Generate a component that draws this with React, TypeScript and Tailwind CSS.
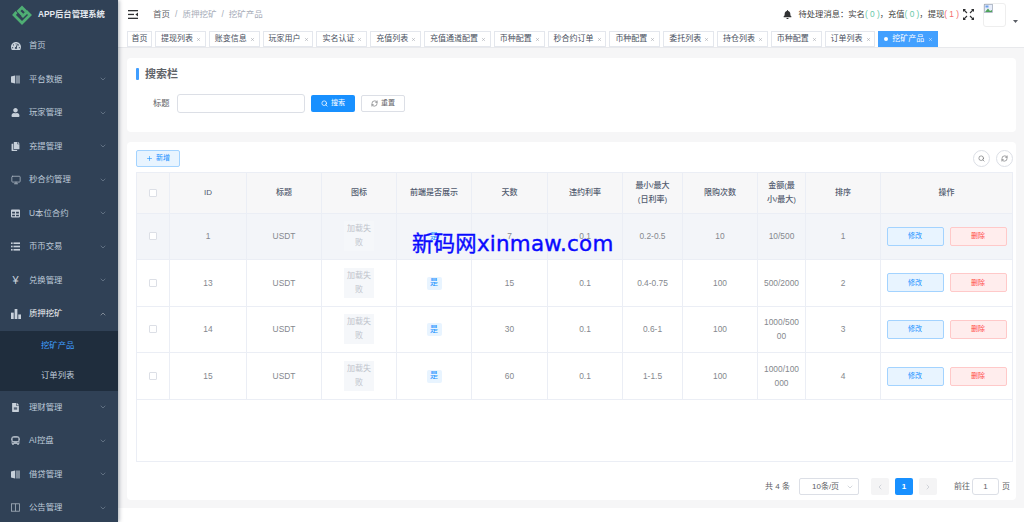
import React from 'react';
import { ChevronDown, ChevronUp, ChevronLeft, ChevronRight, Search, RefreshCw, Plus, Monitor, X } from 'lucide-react';
import { FaTachometerAlt, FaUser, FaCopy, FaTable, FaFileAlt, FaBell, FaBus } from 'react-icons/fa';

const cjk = 'font-["Liberation_Sans","Noto_Sans_CJK_SC",sans-serif]';

const BarsIcon = () => (
  <svg width="10" height="10" viewBox="0 0 11 11" fill="currentColor">
    <rect x="0" y="4" width="3" height="7" />
    <rect x="4" y="0" width="3" height="11" />
    <rect x="8" y="6" width="3" height="5" />
  </svg>
);

const ListIcon = () => (
  <svg width="9" height="9" viewBox="0 0 11 10" fill="currentColor">
    <rect x="0" y="0" width="2" height="2" />
    <rect x="3" y="0" width="8" height="2" />
    <rect x="0" y="4" width="2" height="2" />
    <rect x="3" y="4" width="8" height="2" />
    <rect x="0" y="8" width="2" height="2" />
    <rect x="3" y="8" width="8" height="2" />
  </svg>
);

const HalfBookIcon = () => (
  <svg width="9" height="9" viewBox="0 0 9 9" fill="currentColor">
    <path d="M0 1.5 L4 0.5 V8.5 L0 7.5 Z" />
    <rect x="4.6" y="0.5" width="4.4" height="8" opacity="0.55" />
  </svg>
);

const OutlineBookIcon = () => (
  <svg width="9" height="9" viewBox="0 0 9 9" fill="none" stroke="currentColor" strokeWidth="0.8" opacity="0.8">
    <rect x="0.5" y="0.8" width="8" height="7.4" />
    <path d="M4.5 0.8 V8.2" />
  </svg>
);

const FullscreenIcon = () => (
  <svg width="11" height="11" viewBox="0 0 11 11" fill="#303133" stroke="#303133" strokeWidth="1.1">
    <path d="M1 1 L4 4 M10 1 L7 4 M1 10 L4 7 M10 10 L7 7" />
    <path d="M0 0 H3 L0 3 Z M11 0 H8 L11 3 Z M0 11 H3 L0 8 Z M11 11 H8 L11 8 Z" strokeWidth="0" />
  </svg>
);

const menu = [
  { label: '首页', icon: <FaTachometerAlt size={10} />, noArrow: true },
  { label: '平台数据', icon: <HalfBookIcon /> },
  { label: '玩家管理', icon: <FaUser size={9} /> },
  { label: '充提管理', icon: <FaCopy size={9} /> },
  { label: '秒合约管理', icon: <Monitor size={10} className="opacity-80" /> },
  { label: 'U本位合约', icon: <FaTable size={9} /> },
  { label: '币币交易', icon: <ListIcon /> },
  { label: '兑换管理', icon: <span className="text-[11px] leading-none">¥</span> },
  { label: '质押挖矿', icon: <BarsIcon />, open: true },
  { label: '理财管理', icon: <FaFileAlt size={9} /> },
  { label: 'AI控盘', icon: <FaBus size={9} className="opacity-80" /> },
  { label: '借贷管理', icon: <HalfBookIcon /> },
  { label: '公告管理', icon: <OutlineBookIcon /> },
];

const tags = ['提现列表', '账变信息', '玩家用户', '实名认证', '充值列表', '充值通道配置', '币种配置', '秒合约订单', '币种配置', '委托列表', '持仓列表', '币种配置', '订单列表'];

const rows = [
  { id: 1, days: 7, rate: '0.1', daily: '0.2-0.5', limit: 10, amount: '10/500', sort: 1 },
  { id: 13, days: 15, rate: '0.1', daily: '0.4-0.75', limit: 100, amount: '500/2000', sort: 2 },
  { id: 14, days: 30, rate: '0.1', daily: '0.6-1', limit: 100, amount: '1000/50000', sort: 3 },
  { id: 15, days: 60, rate: '0.1', daily: '1-1.5', limit: 100, amount: '1000/100000', sort: 4 },
];

const Sidebar = () => (
  <aside className="w-[118px] shrink-0 bg-[#304156] text-[#bfcbd9] shadow-[1px_0_4px_rgba(0,21,41,0.35)] z-10 flex flex-col overflow-hidden">
    <div className="h-[29px] shrink-0 flex items-center pl-[12px] gap-[6px]">
      <svg width="20" height="20" viewBox="0 0 20 20" fill="none" stroke="#4fae74" strokeWidth="2.8">
        <path d="M4.5 7 L2 10 L10 18 L18 10 L15 7 L10 12" />
        <path d="M14 6.5 L10 2.5 L6.5 6 L10.5 10" />
      </svg>
      <span className="text-[8.3px] font-bold text-[#e4e9ef] whitespace-nowrap">APP后台管理系统</span>
    </div>
    {menu.map((m) => (
      <React.Fragment key={m.label}>
        <div className={`h-[33.5px] shrink-0 flex items-center pl-[10px] pr-[10px] ${m.open ? 'text-[#f4f4f5]' : ''}`}>
          <span className="w-[11px] flex justify-center text-[#c7d0da]">{m.icon}</span>
          <span className="ml-[8px] text-[8.4px] flex-1 whitespace-nowrap">{m.label}</span>
          {m.noArrow ? null : m.open ? <ChevronUp size={8} className="mr-[1px] opacity-60" /> : <ChevronDown size={8} className="mr-[1px] opacity-50" />}
        </div>
        {m.open && (
          <div className="bg-[#1f2d3d] shrink-0">
            <div className="h-[30px] flex items-center pl-[41px] text-[8.4px] text-[#409eff]">挖矿产品</div>
            <div className="h-[30px] flex items-center pl-[41px] text-[8.4px]">订单列表</div>
          </div>
        )}
      </React.Fragment>
    ))}
  </aside>
);

const Header = () => (
  <header className="h-[29px] shrink-0 flex items-center bg-white pl-[10px]">
    <svg width="10" height="9" viewBox="0 0 10 9" fill="#303133">
      <rect x="0" y="0" width="10" height="1.3" />
      <rect x="0" y="3.8" width="6" height="1.3" />
      <rect x="0" y="7.7" width="10" height="1.3" />
      <path d="M10 2.6 L7.4 4.5 L10 6.4 Z" />
    </svg>
    <div className="ml-[15px] flex items-center text-[8.5px] text-[#a6acb8]">
      <span className="text-[#606266]">首页</span>
      <span className="mx-[5px]">/</span>
      <span>质押挖矿</span>
      <span className="mx-[5px]">/</span>
      <span>挖矿产品</span>
    </div>
    <div className="ml-auto flex items-center pr-[6px]">
      <FaBell size={9} className="text-[#303133]" />
      <span className="ml-[7px] text-[8.3px] text-[#444] whitespace-nowrap">
        待处理消息：实名<span className="text-[#67c9a8]">( 0 )</span>，充值<span className="text-[#67c9a8]">( 0 )</span>，提现<span className="text-[#f56c6c]">( 1 )</span>
      </span>
      <span className="ml-[4px]"><FullscreenIcon /></span>
      <div className="ml-[9px] w-[23px] h-[24px] border border-[#eeeeee] rounded-[3px] relative">
        <svg width="10" height="10" viewBox="0 0 10 10" className="absolute left-0 top-0">
          <rect x="0.5" y="0.5" width="8" height="8" fill="#e8eefb" stroke="#9aa5b5" strokeWidth="0.7" />
          <path d="M1 8 L4 4.5 L6 7 L8 6 L8 8 Z" fill="#4fa35a" />
          <rect x="1.5" y="1.5" width="3" height="2" fill="#6d9eea" />
        </svg>
      </div>
      <svg width="5" height="3" viewBox="0 0 5 3" className="ml-[7px] mt-[13px]">
        <path d="M0 0 H5 L2.5 3 Z" fill="#5a5e66" />
      </svg>
    </div>
  </header>
);

const TagBar = () => (
  <div className="h-[19px] shrink-0 bg-white pl-[9px] flex items-start gap-[3px] border-b border-[#e8e9ec] shadow-[0_1px_2px_rgba(0,0,0,0.04)]">
    <div className="mt-[2px] h-[16px] w-[25px] flex items-center justify-center text-[8px] text-[#495060] border border-[#e4e7ed] bg-white whitespace-nowrap">首页</div>
    {tags.map((t, i) => (
      <div key={i} className="mt-[2px] h-[16px] pl-[5px] pr-[3.8px] flex items-center gap-[3px] text-[8px] text-[#495060] border border-[#e4e7ed] bg-white whitespace-nowrap">
        {t}
        <X size={5} strokeWidth={2} className="shrink-0 text-[#8a8f99]" />
      </div>
    ))}
    <div className="mt-[2px] h-[16px] pl-[6px] pr-[5px] flex items-center text-[8px] text-white bg-[#42a0ff] whitespace-nowrap">
      <span className="w-[4px] h-[4px] rounded-full bg-white mr-[4px]" />
      挖矿产品
      <X size={5} strokeWidth={2} className="ml-[4px] shrink-0" />
    </div>
  </div>
);

const SearchCard = () => (
  <section className="h-[74px] bg-white rounded-[4px] pl-[9px] pt-[10px] shrink-0">
    <div className="flex items-center h-[12px]">
      <span className="w-[3px] h-[12px] rounded-[1px] bg-[#409eff]" />
      <span className="ml-[6px] text-[11px] font-bold text-[#5f6368]">搜索栏</span>
    </div>
    <div className="mt-[14px] flex items-center">
      <span className="ml-[17px] text-[8.3px] text-[#606266] w-[24px]">标题</span>
      <div className="w-[128px] h-[19px] bg-white border border-[#dcdfe6] rounded-[3px]" />
      <button className="ml-[6px] w-[44px] h-[17px] rounded-[2px] bg-[#1890ff] text-white text-[7px] flex items-center justify-center gap-[3px]">
        <Search size={7} strokeWidth={2.5} />搜索
      </button>
      <button className="ml-[6px] w-[44px] h-[17px] rounded-[2px] bg-white border border-[#dcdfe6] text-[#606266] text-[7px] flex items-center justify-center gap-[3px]">
        <RefreshCw size={7} />重置
      </button>
    </div>
  </section>
);

const Checkbox = () => (
  <span className="block w-[8px] h-[8px] mx-auto bg-white border border-[#dcdfe6] rounded-[1px]" />
);

const DataTable = () => (
  <div className="h-[290px] border border-[#ebeef5]">
    <table className="w-[875px] table-fixed border-collapse text-[8.4px] text-[#85888e] text-center">
      <colgroup>
        <col className="w-[32.5px]" />
        <col className="w-[77px]" />
        <col className="w-[75px]" />
        <col className="w-[75px]" />
        <col className="w-[75px]" />
        <col className="w-[76px]" />
        <col className="w-[75px]" />
        <col className="w-[60px]" />
        <col className="w-[75px]" />
        <col className="w-[48px]" />
        <col className="w-[75px]" />
        <col className="w-[131.5px]" />
      </colgroup>
      <thead>
        <tr className="h-[40px] bg-[#f7f7f8] text-[#515a6e] text-[8px]">
          <th className="border-r border-b border-[#ebeef5] font-medium"><Checkbox /></th>
          <th className="border-r border-b border-[#ebeef5] font-medium">ID</th>
          <th className="border-r border-b border-[#ebeef5] font-medium">标题</th>
          <th className="border-r border-b border-[#ebeef5] font-medium">图标</th>
          <th className="border-r border-b border-[#ebeef5] font-medium whitespace-nowrap">前端是否展示</th>
          <th className="border-r border-b border-[#ebeef5] font-medium">天数</th>
          <th className="border-r border-b border-[#ebeef5] font-medium">违约利率</th>
          <th className="border-r border-b border-[#ebeef5] font-medium leading-[14px]">最小/最大<br />(日利率)</th>
          <th className="border-r border-b border-[#ebeef5] font-medium">限购次数</th>
          <th className="border-r border-b border-[#ebeef5] font-medium leading-[14px]">金额(最<br />小/最大)</th>
          <th className="border-r border-b border-[#ebeef5] font-medium">排序</th>
          <th className="border-b border-[#ebeef5] font-medium">操作</th>
        </tr>
      </thead>
      <tbody>
        {rows.map((r, i) => (
          <tr key={r.id} className={`h-[46.6px] ${i === 0 ? 'bg-[#f3f5f9]' : 'bg-white'}`}>
            <td className="border-r border-b border-[#ebeef5]"><Checkbox /></td>
            <td className="border-r border-b border-[#ebeef5]">{r.id}</td>
            <td className="border-r border-b border-[#ebeef5]">USDT</td>
            <td className="border-r border-b border-[#ebeef5]">
              <div className="w-[30px] h-[30px] mx-auto bg-[#f5f7fa] text-[#c0c4cc] text-[8px] leading-[14px] flex items-center justify-center">加载失败</div>
            </td>
            <td className="border-r border-b border-[#ebeef5]">
              <span className="inline-flex w-[15px] h-[13px] items-center justify-center rounded-[2px] bg-[#e8f4ff] text-[#1890ff] text-[8px]">是</span>
            </td>
            <td className="border-r border-b border-[#ebeef5]">{r.days}</td>
            <td className="border-r border-b border-[#ebeef5]">{r.rate}</td>
            <td className="border-r border-b border-[#ebeef5]">{r.daily}</td>
            <td className="border-r border-b border-[#ebeef5]">{r.limit}</td>
            <td className="border-r border-b border-[#ebeef5] leading-[14px] px-[5px] break-all">{r.amount}</td>
            <td className="border-r border-b border-[#ebeef5]">{r.sort}</td>
            <td className="border-b border-[#ebeef5]">
              <div className="flex justify-center gap-[6px]">
                <button className="w-[57px] h-[19px] rounded-[2px] bg-[#e8f4ff] border border-[#a3d3ff] text-[#1890ff] text-[7px]">修改</button>
                <button className="w-[57px] h-[19px] rounded-[2px] bg-[#ffeded] border border-[#ffc9c9] text-[#ff4949] text-[7px]">删除</button>
              </div>
            </td>
          </tr>
        ))}
      </tbody>
    </table>
  </div>
);

const Pagination = () => (
  <div className="mt-[16px] flex items-center justify-end pr-[3px] text-[8px] text-[#606266]">
    <span>共 4 条</span>
    <div className="ml-[9px] w-[60px] h-[17px] border border-[#dcdfe6] rounded-[2px] flex items-center pl-[12px] pr-[4px] justify-between">
      10条/页
      <ChevronDown size={8} className="text-[#c0c4cc]" />
    </div>
    <button className="ml-[12px] w-[18px] h-[17px] bg-[#f4f4f5] rounded-[2px] flex items-center justify-center text-[#c0c4cc]"><ChevronLeft size={8} /></button>
    <button className="ml-[6px] w-[18px] h-[17px] bg-[#1890ff] rounded-[2px] text-white font-bold">1</button>
    <button className="ml-[6px] w-[18px] h-[17px] bg-[#f4f4f5] rounded-[2px] flex items-center justify-center text-[#c0c4cc]"><ChevronRight size={8} /></button>
    <span className="ml-[17px]">前往</span>
    <div className="ml-[2px] w-[27px] h-[17px] border border-[#dcdfe6] rounded-[3px] flex items-center justify-center">1</div>
    <span className="ml-[3px]">页</span>
  </div>
);

const TableCard = () => (
  <section className="h-[358px] mt-[10px] bg-white rounded-[4px] px-[9px] pt-[8px] pr-[3px] shrink-0">
    <div className="h-[17px] mb-[5px] flex items-center justify-between">
      <button className="w-[44px] h-[17px] rounded-[2px] bg-[#e8f4ff] border border-[#a3d3ff] text-[#1890ff] text-[7px] flex items-center justify-center gap-[3px]">
        <Plus size={7} strokeWidth={2} />新增
      </button>
      <div className="flex gap-[6px]">
        <span className="w-[17px] h-[17px] rounded-full border border-[#dcdfe6] flex items-center justify-center text-[#606266]"><Search size={7} /></span>
        <span className="w-[17px] h-[17px] rounded-full border border-[#dcdfe6] flex items-center justify-center text-[#606266]"><RefreshCw size={7} /></span>
      </div>
    </div>
    <DataTable />
    <Pagination />
  </section>
);

export default function App() {
  return (
    <div className={`relative w-[1024px] h-[522px] flex overflow-hidden bg-white ${cjk}`}>
      <Sidebar />
      <div className="flex-1 min-w-0 flex flex-col">
        <Header />
        <TagBar />
        <main className="h-[460px] shrink-0 bg-[#f6f6f7] pl-[9px] pr-[8px] pt-[10px]">
          <SearchCard />
          <TableCard />
        </main>
      </div>
      {/* site watermark */}
      <span className="absolute left-[412px] top-[229px] text-[21.4px] leading-[30px] tracking-[0.25px] text-[#0a0aff] whitespace-nowrap [-webkit-text-stroke:0.4px_#0a0aff] font-['DejaVu_Sans','Noto_Sans_CJK_SC',sans-serif]">新码网xinmaw.com</span>
    </div>
  );
}
